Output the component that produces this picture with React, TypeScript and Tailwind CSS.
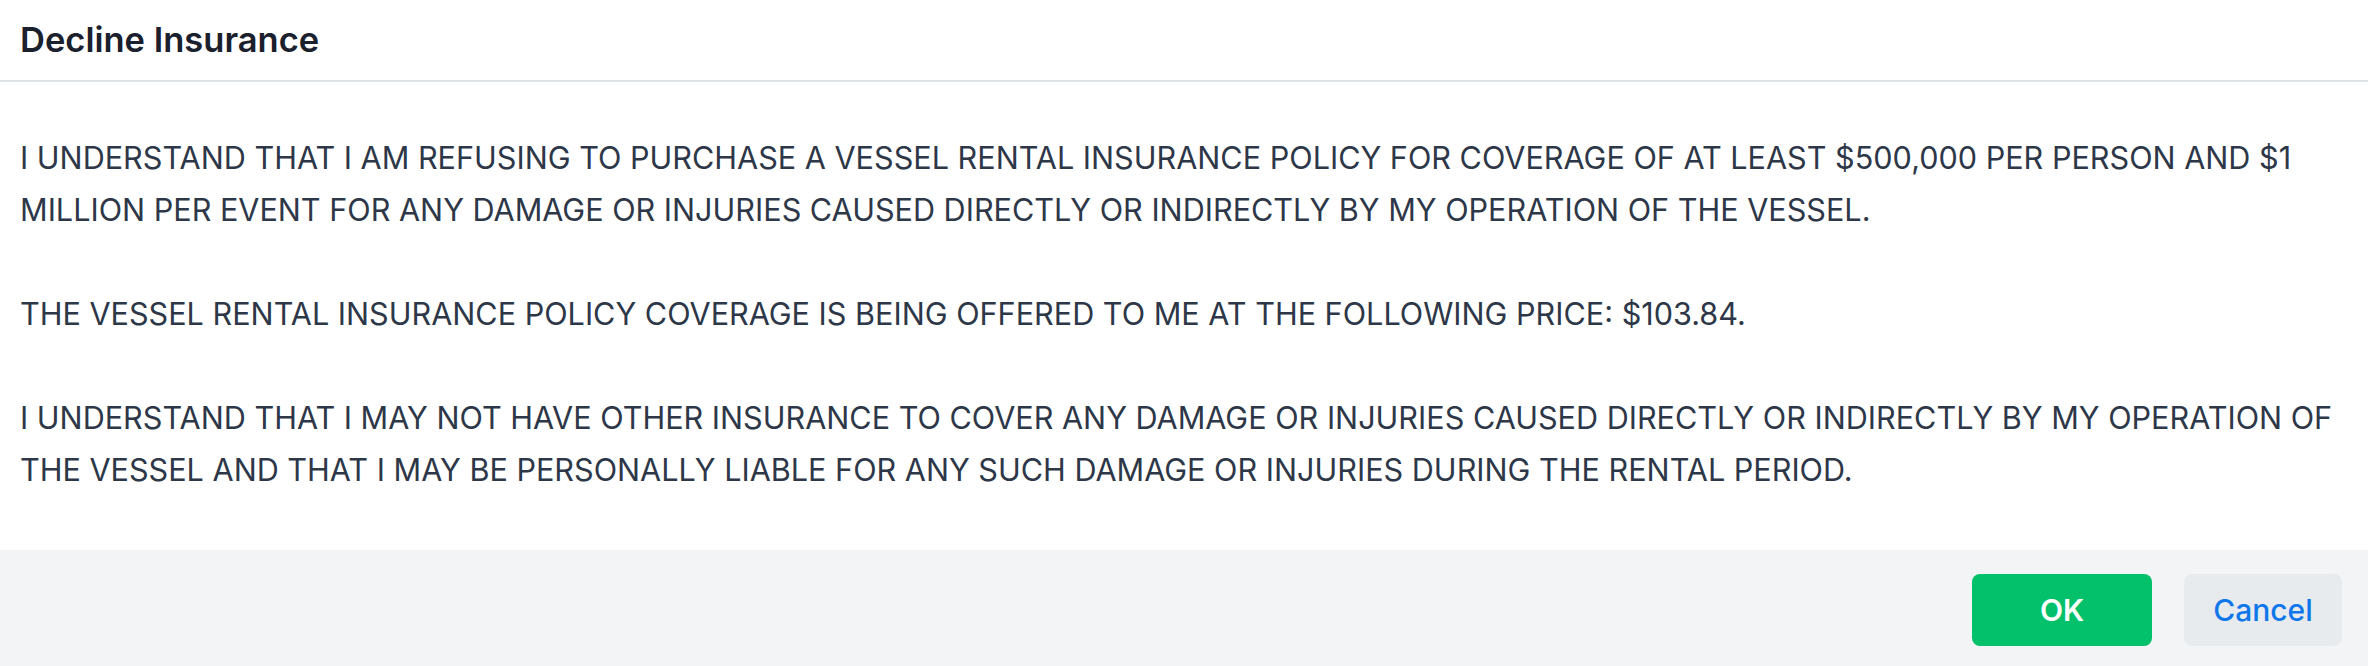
import React from "react";

export default function App() {
  return (
    <div className="w-[2368px] h-[666px] bg-white flex flex-col font-['Inter','Noto_Sans',sans-serif] antialiased">
      <div className="h-[82px] shrink-0 flex items-center px-[20px] border-b-2 border-[#dee2e6]">
        <h1 className="text-[34.5px] font-semibold text-[#1a202c] leading-none">Decline Insurance</h1>
      </div>
      <div className="pt-[50px] pb-[54px] pl-[20px] pr-[20px] text-[30.6px] leading-[52px] text-[#2d3748]">
        <p className="mb-[52px]">
          I UNDERSTAND THAT I AM REFUSING TO PURCHASE A VESSEL RENTAL INSURANCE POLICY FOR COVERAGE OF AT LEAST $500,000 PER PERSON AND $1 MILLION PER EVENT FOR ANY DAMAGE OR INJURIES CAUSED DIRECTLY OR INDIRECTLY BY MY OPERATION OF THE VESSEL.
        </p>
        <p className="mb-[52px]">
          THE VESSEL RENTAL INSURANCE POLICY COVERAGE IS BEING OFFERED TO ME AT THE FOLLOWING PRICE: $103.84.
        </p>
        <p>
          I UNDERSTAND THAT I MAY NOT HAVE OTHER INSURANCE TO COVER ANY DAMAGE OR INJURIES CAUSED DIRECTLY OR INDIRECTLY BY MY OPERATION OF THE VESSEL AND THAT I MAY BE PERSONALLY LIABLE FOR ANY SUCH DAMAGE OR INJURIES DURING THE RENTAL PERIOD.
        </p>
      </div>
      <div className="flex-1 bg-[#f3f4f6] flex justify-end items-start gap-[32px] pt-[24px] pr-[26px]">
        <button className="w-[180px] h-[72px] rounded-[8px] bg-[#02c16a] text-white text-[30px] font-semibold">
          OK
        </button>
        <button className="w-[158px] h-[72px] rounded-[8px] bg-[#e8ebee] text-[#0f77ea] text-[30px] font-medium">
          Cancel
        </button>
      </div>
    </div>
  );
}
